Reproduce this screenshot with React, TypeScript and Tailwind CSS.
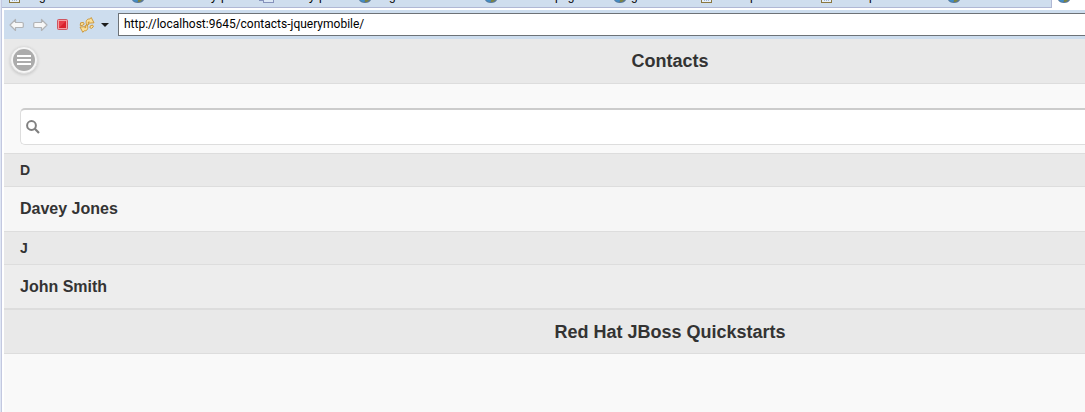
import React from "react";

type IconKind = "page" | "globe" | "windows";

interface StripTab {
  icon: IconKind;
  width: string;
  marks: { text: string; gap: string }[];
}

const tabs: StripTab[] = [
  { icon: "page", width: "w-[123px]", marks: [{ text: "g", gap: "ml-[18px]" }] },
  { icon: "globe", width: "w-[127px]", marks: [{ text: "y", gap: "ml-[67px]" }, { text: "p", gap: "ml-1" }] },
  { icon: "windows", width: "w-[100px]", marks: [{ text: "y", gap: "ml-[34px]" }, { text: "p", gap: "ml-1" }] },
  { icon: "globe", width: "w-[126px]", marks: [{ text: "g", gap: "ml-[18px]" }] },
  { icon: "globe", width: "w-[129px]", marks: [{ text: "p", gap: "ml-[58px]" }, { text: "g", gap: "ml-[6px]" }] },
  { icon: "globe", width: "w-[87px]", marks: [{ text: "g", gap: "ml-[5px]" }] },
  { icon: "page", width: "w-[120px]", marks: [{ text: "p", gap: "ml-[37px]" }] },
  { icon: "page", width: "w-[127px]", marks: [{ text: "p", gap: "ml-[36px]" }] },
  { icon: "globe", width: "w-[103px]", marks: [] },
];

function TabIcon({ kind }: { kind: IconKind }) {
  if (kind === "page") {
    return (
      <svg className="block h-[3px] w-3 shrink-0" viewBox="0 0 12 3" shapeRendering="crispEdges" aria-hidden="true">
        <rect width="11" height="3" fill="#8a7840" />
        <rect x="1" width="9" height="2" fill="#e8f0f8" />
        <path d="M3 0h1v1H3zM5 0h1v1H5zM7 0h1v1H7z" fill="#9db6d6" />
      </svg>
    );
  }
  if (kind === "windows") {
    return (
      <svg className="block h-[3px] w-4 shrink-0" viewBox="0 0 16 3" shapeRendering="crispEdges" aria-hidden="true">
        <rect width="12" height="1" fill="#8592bb" />
        <rect x="4" width="11" height="3" fill="#8592bb" />
        <rect x="5" width="9" height="2" fill="#dbe7f5" />
      </svg>
    );
  }
  return (
    <svg className="block h-[3px] w-3 shrink-0" viewBox="0 0 12 3" aria-hidden="true">
      <path d="M0 0h12c-1 2-3 3-6 3S1 2 0 0z" fill="#56779a" />
      <path d="M1 0h5L5 2C3 2 2 1 1 0z" fill="#418cc4" />
      <path d="M6 0h4L8 2H6z" fill="#7c8340" />
    </svg>
  );
}

function TabStrip() {
  return (
    <div className="flex h-[10px] items-start overflow-hidden bg-white">
      <div className="flex h-2 shrink-0 items-start overflow-hidden border-r border-b border-[#b0b8d4] bg-[#cfdeee] pl-[7px]">
        {tabs.map((tab, i) => (
          <button key={i} type="button" aria-label={`Editor tab ${i + 1}`} className={`flex h-2 shrink-0 items-start ${tab.width}`}>
            <TabIcon kind={tab.icon} />
            {tab.marks.map((mark, j) => (
              <span key={j} className={`-mt-[11px] block text-[12px] leading-[14px] text-black ${mark.gap}`}>
                {mark.text}
              </span>
            ))}
          </button>
        ))}
      </div>
      <button type="button" aria-label="Current editor tab" className="flex h-2 flex-1 items-start bg-white pl-[6px]">
        <TabIcon kind="globe" />
      </button>
    </div>
  );
}

function Toolbar() {
  return (
    <div className="flex h-[29px] items-center bg-[#cdddee] pl-[5px]">
      <button type="button" aria-label="Back" className="mr-[7px]">
        <svg className="block h-4 w-4" viewBox="0 0 16 16" aria-hidden="true">
          <path d="M1 8 6.5 2.5V5.5H13q1.3 0 1.3 1V9.5q0 1-1.3 1H6.5V13.5z" fill="#f7f7f7" stroke="#b1b3b6" strokeWidth="1.2" strokeLinejoin="round" />
        </svg>
      </button>
      <button type="button" aria-label="Forward" className="mr-[7px]">
        <svg className="block h-4 w-4" viewBox="0 0 16 16" aria-hidden="true">
          <path d="M15 8 9.5 2.5V5.5H3q-1.3 0-1.3 1V9.5q0 1 1.3 1H9.5V13.5z" fill="#f7f7f7" stroke="#b1b3b6" strokeWidth="1.2" strokeLinejoin="round" />
        </svg>
      </button>
      <button type="button" aria-label="Stop" className="mr-2">
        <svg className="block h-4 w-4" viewBox="0 0 16 16" aria-hidden="true">
          <rect x="2.5" y="2.5" width="10" height="10" rx="1" fill="#f2a0a4" stroke="#cf5560" />
          <rect x="4" y="4" width="7" height="7" fill="#d9202c" />
          <path d="M4 4h7L4 11z" fill="#e63e48" />
        </svg>
      </button>
      <button type="button" aria-label="Refresh" className="mr-[6px]">
        <svg className="block h-4 w-4" viewBox="0 0 16 16" aria-hidden="true">
          <g fill="#fbe09a" stroke="#c9912f" strokeWidth="0.9" strokeLinejoin="round">
            <path d="M7.8 8.2C6.2 4.6 7.6 1.6 10.8 2L12.2.5 15 5.8 9.4 6.2 10.2 4.8C9 4.7 9 6 9.8 7.4z" />
            <path d="M8.2 7.9C9.6 11.6 8.2 14.2 5.2 13.8L3.8 15.3 1 10 6.6 9.7 5.8 11C7 11.1 7 9.8 6.2 8.5z" />
            <path d="M1.2 8.4 1.6 5.8 4.4 5.4 5.2 7.2 3 8.6z" />
            <path d="M11.4 8.8 13.6 8 14.4 9.8 12.4 11.4 10.8 10.6z" />
          </g>
        </svg>
      </button>
      <button type="button" aria-label="Refresh options" className="mr-[9px]">
        <svg className="block h-1 w-2" viewBox="0 0 8 4" aria-hidden="true">
          <path d="M0 0h8L4 4z" fill="#1c1c1c" />
        </svg>
      </button>
      <input
        type="text"
        aria-label="Address"
        defaultValue="http://localhost:9645/contacts-jquerymobile/"
        className="h-[23px] min-w-0 flex-1 border border-r-0 border-[#6d7277] bg-white pb-px pl-[5px] font-['Roboto',sans-serif] text-[12px] text-black outline-none"
      />
    </div>
  );
}

const groups = [
  { letter: "D", name: "Davey Jones", tone: "bg-[#f6f6f6]" },
  { letter: "J", name: "John Smith", tone: "bg-[#ededed]" },
];

export default function App() {
  return (
    <div className="flex min-h-screen overflow-hidden bg-[#f9f9f9] font-['Liberation_Sans',Arial,sans-serif] text-[#333]">
      <div className="w-[2px] shrink-0 border-r border-[#c3c8e0] bg-[#dfe6f4]" />
      <div className="flex min-w-0 flex-1 flex-col">
        <TabStrip />
        <div className="flex flex-1 flex-col border-l-2 border-white">
          <Toolbar />
          <header className="-mr-[251px] grid h-[45px] grid-cols-[1fr_auto_1fr] items-center border-b border-[#ddd] bg-[#e9e9e9] px-[6px]">
            <button
              type="button"
              aria-label="Menu"
              className="mb-[2px] flex h-7 w-7 items-center justify-center rounded-full border border-[#ddd] bg-[#f6f6f6] shadow-[0_1px_3px_rgba(0,0,0,0.15)]"
            >
              <svg className="block h-[22px] w-[22px] shrink-0" viewBox="0 0 22 22" aria-hidden="true">
                <circle cx="11" cy="11" r="11" fill="#acacac" />
                <path d="M4 6h14v2H4zM4 10h14v2H4zM4 14h14v2H4z" fill="#fff" />
              </svg>
            </button>
            <h1 className="text-[18px] leading-5 font-black">Contacts</h1>
          </header>
          <main>
            <form className="pt-6 pb-2 pl-4" onSubmit={(e) => e.preventDefault()}>
              <label className="flex h-[37px] items-center rounded-l-[5px] border border-t-2 border-r-0 border-[#ddd] border-t-[#ccc] bg-white pl-[5px]">
                <svg className="block h-[14px] w-[14px] shrink-0" viewBox="0 0 14 14" aria-hidden="true">
                  <circle cx="5.5" cy="5.5" r="4.4" fill="none" stroke="#808080" strokeWidth="2" />
                  <path d="m8.8 8.8 4.2 4.2" stroke="#808080" strokeWidth="2.2" />
                </svg>
                <input type="search" aria-label="Filter contacts" className="ml-2 min-w-0 flex-1 bg-transparent text-[16px] outline-none" />
              </label>
            </form>
            {groups.map((group) => (
              <section key={group.letter}>
                <h2 className="flex h-[33px] items-center border-t border-[#ddd] bg-[#e9e9e9] pl-4 text-[14px] font-bold">{group.letter}</h2>
                <a href="#contact" className={`flex h-[45px] items-center border-t border-[#ddd] pl-4 text-[16px] font-bold ${group.tone}`}>
                  {group.name}
                </a>
              </section>
            ))}
          </main>
          <footer className="-mt-px -mr-[251px] flex h-[46px] items-center justify-center border-t-2 border-b border-[#ddd] bg-[#e9e9e9]">
            <h2 className="text-[18px] leading-5 font-black">Red Hat JBoss Quickstarts</h2>
          </footer>
        </div>
      </div>
    </div>
  );
}
